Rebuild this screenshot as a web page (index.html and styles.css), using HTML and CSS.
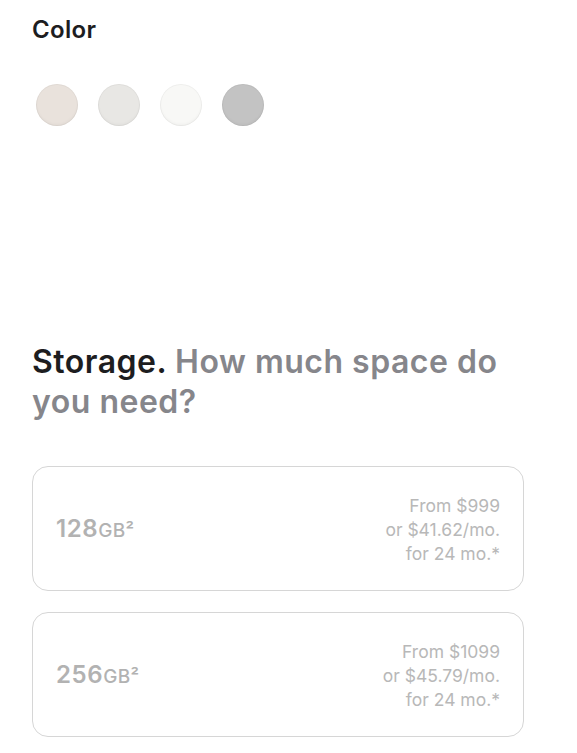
FILE: index.html
```html
<!DOCTYPE html>
<html>
<head>
<meta charset="utf-8">
<link rel="stylesheet" href="styles.css">
</head>
<body>
<div class="page">
  <section class="color">
    <h2 class="color-title">Color</h2>
    <div class="swatches">
      <span class="swatch s1"></span>
      <span class="swatch s2"></span>
      <span class="swatch s3"></span>
      <span class="swatch s4"></span>
    </div>
  </section>
  <section class="storage">
    <h2 class="storage-title"><span class="strong">Storage.</span> <span class="sub">How much space do you need?</span></h2>
    <div class="options">
      <div class="option">
        <div class="cap"><span class="num">128</span><span class="unit">GB²</span></div>
        <div class="price">From $999<br>or $41.62/mo.<br>for 24 mo.*</div>
      </div>
      <div class="option">
        <div class="cap"><span class="num">256</span><span class="unit">GB²</span></div>
        <div class="price">From $1099<br>or $45.79/mo.<br>for 24 mo.*</div>
      </div>
    </div>
  </section>
</div>
</body>
</html>
```
FILE: styles.css
```css
* { box-sizing: border-box; }
html, body { margin: 0; padding: 0; background: #fff; }
body { font-family: Inter, "Noto Sans", sans-serif; color: #1d1d1f; }
.page { padding: 16px 53px 0 32px; }
.color-title { margin: 0; font-size: 24px; font-weight: 600; line-height: 28px; letter-spacing: 0.3px; }
.swatches { display: flex; gap: 20px; margin-top: 40px; padding-left: 4px; }
.swatch { width: 42px; height: 42px; border-radius: 50%; box-shadow: inset 0 0 0 1px rgba(0,0,0,0.04), inset 0 -2px 3px rgba(0,0,0,0.03); }
.s1 { background: #e9e2dc; }
.s2 { background: #e8e7e4; }
.s3 { background: #f8f8f6; }
.s4 { background: #c3c3c3; }
.storage { margin-top: 216px; }
.storage-title { margin: 0; font-size: 32px; font-weight: 600; line-height: 40px; letter-spacing: 0.5px; color: #86868b; }
.storage-title .strong { color: #1d1d1f; }
.storage-title .sub { color: #86868b; }
.options { display: flex; flex-direction: column; gap: 21px; margin-top: 44px; }
.option { height: 125px; border: 1px solid #d6d6d6; border-radius: 16px; display: flex; align-items: center; justify-content: space-between; padding: 0 23px 0 23px; }
.cap { color: #b2b2b2; font-weight: 600; }
.num { font-size: 24px; letter-spacing: 0.6px; }
.unit { font-size: 19px; font-weight: 500; letter-spacing: 0.3px; }
.price { text-align: right; font-size: 17.5px; line-height: 24px; color: #b8b8b8; padding-top: 2px; }
```
